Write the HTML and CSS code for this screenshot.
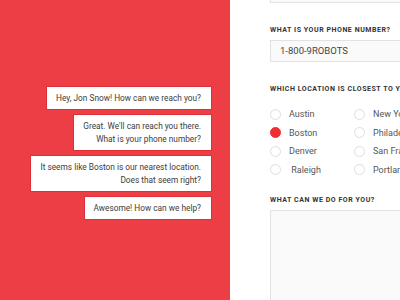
FILE: index.html
```html
<!DOCTYPE html>
<html lang="en">
<head>
    <meta charset="UTF-8">
    <title>Contact Bot</title>
    <link rel="stylesheet" href="styles.css">
</head>
<body>
    <div class="page">
        <!-- Chat side -->
        <div class="chat">
            <div class="bubble">Hey, Jon Snow! How can we reach you?</div>
            <div class="bubble">Great. We'll can reach you there.<br>What is your phone number?</div>
            <div class="bubble">It seems like Boston is our nearest location.<br>Does that seem right?</div>
            <div class="bubble">Awesome! How can we help?</div>
        </div>

        <!-- Form side -->
        <div class="form">
            <div class="field">
                <div class="input"></div>
            </div>
            <div class="field">
                <div class="label">What is your phone number?</div>
                <div class="input">1-800-9ROBOTS</div>
            </div>
            <div class="field">
                <div class="label">Which location is closest to you?</div>
                <div class="radios">
                    <div class="radio"><span class="dot"></span>Austin</div>
                    <div class="radio"><span class="dot"></span>New York</div>
                    <div class="radio"><span class="dot checked"></span>Boston</div>
                    <div class="radio"><span class="dot"></span>Philadelphia</div>
                    <div class="radio"><span class="dot"></span>Denver</div>
                    <div class="radio"><span class="dot"></span>San Francisco</div>
                    <div class="radio"><span class="dot"></span>&nbsp;Raleigh</div>
                    <div class="radio"><span class="dot"></span>Portland</div>
                </div>
            </div>
            <div class="field">
                <div class="label">What can we do for you?</div>
                <div class="textarea"></div>
            </div>
        </div>
    </div>
</body>
</html>
```

FILE: styles.css
```css
body {
    margin: 0;
    font-family: Roboto, "Liberation Sans", Arial, sans-serif;
    background: white;
}
.page {
    display: flex;
    width: 400px;
    height: 300px;
    overflow: hidden;
}
.chat {
    width: 230px;
    flex-shrink: 0;
    background-color: #ee3e45;
    display: flex;
    flex-direction: column;
    align-items: flex-end;
    gap: 6px;
    padding: 87px 19px 0 0;
    box-sizing: border-box;
}
.bubble {
    background: white;
    color: #3c3c3c;
    font-size: 8.3px;
    line-height: 13px;
    text-align: right;
    padding: 5px 10px 4px 9px;
    box-shadow: 0 0 0 1px #dc3038;
}
.form {
    flex: 1;
    padding-left: 40px;
    margin-top: -19px;
    overflow: hidden;
}
.field {
    margin-bottom: 23px;
}
.label {
    font-size: 7px;
    font-weight: bold;
    letter-spacing: 0.55px;
    text-transform: uppercase;
    color: #333;
    line-height: 9px;
    margin-bottom: 5px;
    white-space: nowrap;
}
.input {
    width: 200px;
    height: 20px;
    border: 1px solid #e2e2e2;
    background: #fafafa;
    font-size: 9.5px;
    line-height: 20px;
    padding-left: 9px;
    color: #444;
}
.radios {
    display: grid;
    grid-template-columns: 84px 84px;
    padding-top: 6px;
}
.radio {
    display: flex;
    align-items: center;
    height: 18.5px;
    font-size: 9px;
    color: #555;
    white-space: nowrap;
}
.dot {
    width: 9px;
    height: 9px;
    border: 1px solid #dedede;
    border-radius: 50%;
    margin-right: 8px;
    flex-shrink: 0;
}
.dot.checked {
    background: #ee3035;
    border-color: #ee3035;
}
.field:last-child .label {
    margin-top: -6px;
}
.textarea {
    width: 200px;
    height: 120px;
    border: 1px solid #e2e2e2;
    background: #fafafa;
}
```
